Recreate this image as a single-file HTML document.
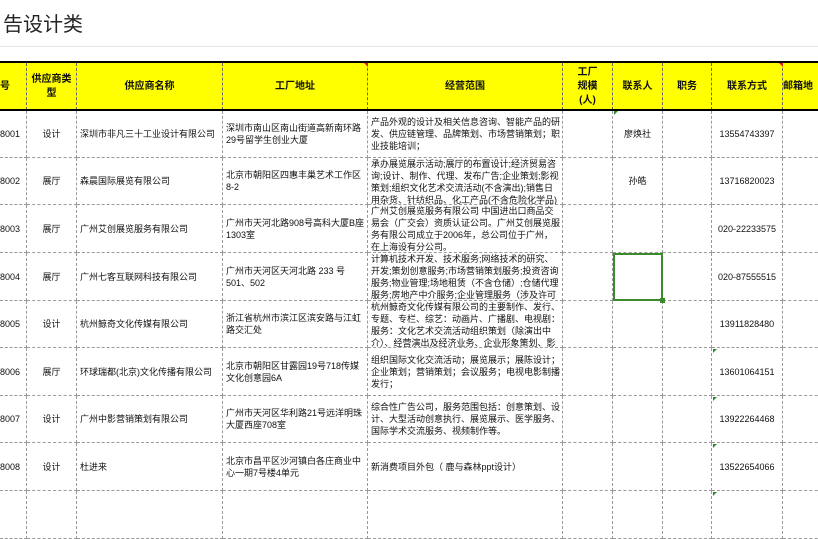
<!DOCTYPE html>
<html><head><meta charset="utf-8"><style>
*{margin:0;padding:0;box-sizing:border-box}
body{width:818px;height:506px;overflow:hidden;background:#fff;position:relative;font-family:"Liberation Sans","Noto Sans CJK SC","WenQuanYi Zen Hei",sans-serif;color:#111}
.t{position:absolute;left:3px;top:8px;font-size:20px;color:#222}
.hl{position:absolute;left:0;top:46px;width:818px;height:1px;background:#e6e6e6}
.c{position:absolute;overflow:hidden;display:flex;align-items:center;font-size:9px;line-height:12px;border-right:1px dashed #9a9a9a;border-bottom:1px dashed #9a9a9a}
.h{background:#ffff00;font-weight:bold;font-size:10px;line-height:14px;justify-content:center;text-align:center;border-right:1px dashed #666;border-bottom:none}
.ctr{justify-content:center;text-align:center}
.l{padding-left:3px;padding-right:1px}
.top{position:absolute;left:0;width:818px;height:2px;background:#000}
.sel{position:absolute;left:613px;top:253px;width:50px;height:48px;border:2px solid #3c8a2e}
.tri{position:absolute;width:0;height:0;border-top:4px solid #2e8b2e;border-right:4px solid transparent}
.red{position:absolute;width:0;height:0;border-top:4px solid #e02020;border-left:4px solid transparent}
</style></head><body>
<div class="t">告设计类</div>
<div class="hl"></div>

<div class="c h" style="left:0;top:63px;width:27px;height:47px;justify-content:flex-start">号</div>
<div class="c h" style="left:27px;top:63px;width:50px;height:47px">供应商类<br>型</div>
<div class="c h" style="left:77px;top:63px;width:146px;height:47px">供应商名称</div>
<div class="c h" style="left:223px;top:63px;width:145px;height:47px">工厂地址</div>
<div class="c h" style="left:368px;top:63px;width:195px;height:47px">经营范围</div>
<div class="c h" style="left:563px;top:63px;width:50px;height:47px">工厂<br>规模<br>(人)</div>
<div class="c h" style="left:613px;top:63px;width:50px;height:47px">联系人</div>
<div class="c h" style="left:663px;top:63px;width:49px;height:47px">职务</div>
<div class="c h" style="left:712px;top:63px;width:71px;height:47px">联系方式</div>
<div class="c h" style="left:783px;top:63px;width:40px;height:47px;justify-content:flex-start">邮箱地</div>
<div class="top" style="top:61px"></div>
<div class="top" style="top:109px"></div>
<div class="red" style="left:364px;top:63px"></div>
<div class="red" style="left:779px;top:63px"></div>

<div class="c" style="left:0;top:111px;width:27px;height:47px">8001</div>
<div class="c ctr" style="left:27px;top:111px;width:50px;height:47px">设计</div>
<div class="c l" style="left:77px;top:111px;width:146px;height:47px">深圳市非凡三十工业设计有限公司</div>
<div class="c l" style="left:223px;top:111px;width:145px;height:47px">深圳市南山区南山街道高新南环路29号留学生创业大厦</div>
<div class="c l" style="left:368px;top:111px;width:195px;height:47px">产品外观的设计及相关信息咨询、智能产品的研发、供应链管理、品牌策划、市场营销策划；职业技能培训；</div>
<div class="c" style="left:563px;top:111px;width:50px;height:47px"></div>
<div class="c ctr" style="left:613px;top:111px;width:50px;height:47px">廖焕社</div>
<div class="c" style="left:663px;top:111px;width:49px;height:47px"></div>
<div class="c ctr" style="left:712px;top:111px;width:71px;height:47px">13554743397</div>
<div class="c" style="left:783px;top:111px;width:40px;height:47px"></div>

<div class="c" style="left:0;top:158px;width:27px;height:47px">8002</div>
<div class="c ctr" style="left:27px;top:158px;width:50px;height:47px">展厅</div>
<div class="c l" style="left:77px;top:158px;width:146px;height:47px">森晨国际展览有限公司</div>
<div class="c l" style="left:223px;top:158px;width:145px;height:47px">北京市朝阳区四惠丰巢艺术工作区8-2</div>
<div class="c l" style="left:368px;top:158px;width:195px;height:47px;align-items:flex-start">承办展览展示活动;展厅的布置设计;经济贸易咨询;设计、制作、代理、发布广告;企业策划;影视策划;组织文化艺术交流活动(不含演出);销售日用杂货、针纺织品、化工产品(不含危险化学品)</div>
<div class="c" style="left:563px;top:158px;width:50px;height:47px"></div>
<div class="c ctr" style="left:613px;top:158px;width:50px;height:47px">孙皓</div>
<div class="c" style="left:663px;top:158px;width:49px;height:47px"></div>
<div class="c ctr" style="left:712px;top:158px;width:71px;height:47px">13716820023</div>
<div class="c" style="left:783px;top:158px;width:40px;height:47px"></div>

<div class="c" style="left:0;top:205px;width:27px;height:48px">8003</div>
<div class="c ctr" style="left:27px;top:205px;width:50px;height:48px">展厅</div>
<div class="c l" style="left:77px;top:205px;width:146px;height:48px">广州艾创展览服务有限公司</div>
<div class="c l" style="left:223px;top:205px;width:145px;height:48px">广州市天河北路908号高科大厦B座1303室</div>
<div class="c l" style="left:368px;top:205px;width:195px;height:48px;align-items:flex-start">广州艾创展览服务有限公司 中国进出口商品交易会（广交会）资质认证公司。广州艾创展览服务有限公司成立于2006年，总公司位于广州，在上海设有分公司。</div>
<div class="c" style="left:563px;top:205px;width:50px;height:48px"></div>
<div class="c" style="left:613px;top:205px;width:50px;height:48px"></div>
<div class="c" style="left:663px;top:205px;width:49px;height:48px"></div>
<div class="c ctr" style="left:712px;top:205px;width:71px;height:48px">020-22233575</div>
<div class="c" style="left:783px;top:205px;width:40px;height:48px"></div>

<div class="c" style="left:0;top:253px;width:27px;height:48px">8004</div>
<div class="c ctr" style="left:27px;top:253px;width:50px;height:48px">展厅</div>
<div class="c l" style="left:77px;top:253px;width:146px;height:48px">广州七客互联网科技有限公司</div>
<div class="c l" style="left:223px;top:253px;width:145px;height:48px">广州市天河区天河北路 233 号501、502</div>
<div class="c l" style="left:368px;top:253px;width:195px;height:48px;align-items:flex-start">计算机技术开发、技术服务;网络技术的研究、开发;策划创意服务;市场营销策划服务;投资咨询服务;物业管理;场地租赁（不含仓储）;仓储代理服务;房地产中介服务;企业管理服务（涉及许可经营项目的除外）</div>
<div class="c" style="left:563px;top:253px;width:50px;height:48px"></div>
<div class="c" style="left:613px;top:253px;width:50px;height:48px"></div>
<div class="c" style="left:663px;top:253px;width:49px;height:48px"></div>
<div class="c ctr" style="left:712px;top:253px;width:71px;height:48px">020-87555515</div>
<div class="c" style="left:783px;top:253px;width:40px;height:48px"></div>

<div class="c" style="left:0;top:301px;width:27px;height:47px">8005</div>
<div class="c ctr" style="left:27px;top:301px;width:50px;height:47px">设计</div>
<div class="c l" style="left:77px;top:301px;width:146px;height:47px">杭州鲸奇文化传媒有限公司</div>
<div class="c l" style="left:223px;top:301px;width:145px;height:47px">浙江省杭州市滨江区滨安路与江虹路交汇处</div>
<div class="c l" style="left:368px;top:301px;width:195px;height:47px;align-items:flex-start">杭州鲸奇文化传媒有限公司的主要制作、发行、专题、专栏、综艺：动画片、广播剧、电视剧：服务：文化艺术交流活动组织策划（除演出中介）、经营演出及经济业务、企业形象策划、影视策划、展览展示</div>
<div class="c" style="left:563px;top:301px;width:50px;height:47px"></div>
<div class="c" style="left:613px;top:301px;width:50px;height:47px"></div>
<div class="c" style="left:663px;top:301px;width:49px;height:47px"></div>
<div class="c ctr" style="left:712px;top:301px;width:71px;height:47px">13911828480</div>
<div class="c" style="left:783px;top:301px;width:40px;height:47px"></div>

<div class="c" style="left:0;top:348px;width:27px;height:48px">8006</div>
<div class="c ctr" style="left:27px;top:348px;width:50px;height:48px">展厅</div>
<div class="c l" style="left:77px;top:348px;width:146px;height:48px">环球瑞都(北京)文化传播有限公司</div>
<div class="c l" style="left:223px;top:348px;width:145px;height:48px">北京市朝阳区甘露园19号718传媒文化创意园6A</div>
<div class="c l" style="left:368px;top:348px;width:195px;height:48px">组织国际文化交流活动；展览展示；展陈设计；企业策划；营销策划；会议服务；电视电影制播发行；</div>
<div class="c" style="left:563px;top:348px;width:50px;height:48px"></div>
<div class="c" style="left:613px;top:348px;width:50px;height:48px"></div>
<div class="c" style="left:663px;top:348px;width:49px;height:48px"></div>
<div class="c ctr" style="left:712px;top:348px;width:71px;height:48px">13601064151</div>
<div class="c" style="left:783px;top:348px;width:40px;height:48px"></div>

<div class="c" style="left:0;top:396px;width:27px;height:47px">8007</div>
<div class="c ctr" style="left:27px;top:396px;width:50px;height:47px">设计</div>
<div class="c l" style="left:77px;top:396px;width:146px;height:47px">广州中影营销策划有限公司</div>
<div class="c l" style="left:223px;top:396px;width:145px;height:47px">广州市天河区华利路21号远洋明珠大厦西座708室</div>
<div class="c l" style="left:368px;top:396px;width:195px;height:47px">综合性广告公司，服务范围包括：创意策划、设计、大型活动创意执行、展览展示、医学服务、国际学术交流服务、视频制作等。</div>
<div class="c" style="left:563px;top:396px;width:50px;height:47px"></div>
<div class="c" style="left:613px;top:396px;width:50px;height:47px"></div>
<div class="c" style="left:663px;top:396px;width:49px;height:47px"></div>
<div class="c ctr" style="left:712px;top:396px;width:71px;height:47px">13922264468</div>
<div class="c" style="left:783px;top:396px;width:40px;height:47px"></div>

<div class="c" style="left:0;top:443px;width:27px;height:48px">8008</div>
<div class="c ctr" style="left:27px;top:443px;width:50px;height:48px">设计</div>
<div class="c l" style="left:77px;top:443px;width:146px;height:48px">杜进来</div>
<div class="c l" style="left:223px;top:443px;width:145px;height:48px">北京市昌平区沙河镇白各庄商业中心一期7号楼4单元</div>
<div class="c l" style="left:368px;top:443px;width:195px;height:48px">新消费项目外包（ 鹿与森林ppt设计）</div>
<div class="c" style="left:563px;top:443px;width:50px;height:48px"></div>
<div class="c" style="left:613px;top:443px;width:50px;height:48px"></div>
<div class="c" style="left:663px;top:443px;width:49px;height:48px"></div>
<div class="c ctr" style="left:712px;top:443px;width:71px;height:48px">13522654066</div>
<div class="c" style="left:783px;top:443px;width:40px;height:48px"></div>

<div class="c" style="left:0;top:491px;width:27px;height:48px"></div>
<div class="c" style="left:27px;top:491px;width:50px;height:48px"></div>
<div class="c" style="left:77px;top:491px;width:146px;height:48px"></div>
<div class="c" style="left:223px;top:491px;width:145px;height:48px"></div>
<div class="c" style="left:368px;top:491px;width:195px;height:48px"></div>
<div class="c" style="left:563px;top:491px;width:50px;height:48px"></div>
<div class="c" style="left:613px;top:491px;width:50px;height:48px"></div>
<div class="c" style="left:663px;top:491px;width:49px;height:48px"></div>
<div class="c" style="left:712px;top:491px;width:71px;height:48px"></div>
<div class="c" style="left:783px;top:491px;width:40px;height:48px"></div>

<div class="sel"></div>
<div style="position:absolute;left:660px;top:298px;width:5px;height:5px;background:#3c8a2e"></div>
<div class="tri" style="left:614px;top:111px"></div>
<div class="tri" style="left:713px;top:349px"></div>
<div class="tri" style="left:713px;top:397px"></div>
<div class="tri" style="left:713px;top:444px"></div>
<div class="tri" style="left:713px;top:492px"></div>
</body></html>
